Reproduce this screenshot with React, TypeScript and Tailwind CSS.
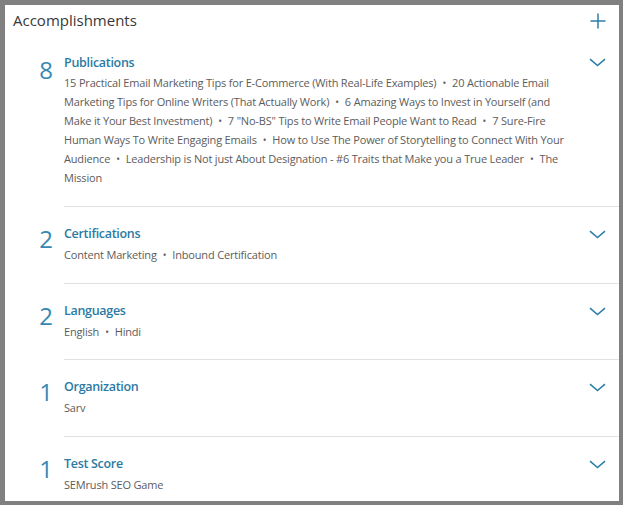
import React from "react";

const Sep = () => <span className="mx-[6px] text-[10px] leading-none">•</span>;

const Chevron = () => (
  <svg width="17" height="9" viewBox="0 0 17 9" fill="none">
    <path d="M1 1.2 L8.5 7.5 L16 1.2" stroke="#2c7ea7" strokeWidth="1.6" />
  </svg>
);

type Sec = { n: number; title: string; lines: React.ReactNode[]; first?: boolean; last?: boolean; pb?: string };

const Section = ({ n, title, lines, first, last, pb }: Sec) => (
  <div className="flex">
    <div className="w-[59px] shrink-0 pl-[29px]">
      <div className={`w-[24px] text-center text-[24px] leading-none text-[#3688b2] ${first ? "mt-[13px]" : "mt-[20px]"}`}>{n}</div>
    </div>
    <div className={`flex-1 pr-[12px] ${last ? "" : "border-b border-[#e1e1e1]"} ${first ? "pt-[8px]" : "pt-[17px]"} ${pb ?? "pb-[18px]"}`}>
      <div className="flex items-start justify-between">
        <div className="text-[12.5px] tracking-[-0.3px] leading-[20px] font-semibold text-[#2b7aa3]">{title}</div>
        <div className={`${first ? "mt-[5px]" : "mt-[6px]"} mr-[1px]`}><Chevron /></div>
      </div>
      <div className={`${first ? "mt-0" : "mt-[1px]"} text-[11px] tracking-[-0.18px] leading-[19px] text-[#5c5c5c] whitespace-nowrap`}>
        {lines.map((l, i) => (
          <div key={i} className="h-[19px]">{l}</div>
        ))}
      </div>
    </div>
  </div>
);

export default function App() {
  return (
    <div className="w-[623px] h-[505px] bg-[#808080] pt-[5px] pl-[5px] pr-[4px] pb-[4px]" style={{ fontFamily: '"Open Sans", "Noto Sans", sans-serif' }}>
      <div className="h-full bg-white overflow-hidden">
        <div className="h-[40px] flex items-start justify-between pl-[8px] pr-[13px] pt-[3px]">
          <div className="text-[15px] leading-[24px] text-[#383838]">Accomplishments</div>
          <svg width="16" height="16" viewBox="0 0 16 16" className="mt-[5px]">
            <path d="M8 0.5 V15.5 M0.5 8 H15.5" stroke="#2c7ea7" strokeWidth="1.5" />
          </svg>
        </div>
        <Section
          first
          n={8}
          pb="pb-[19px]"
          title="Publications"
          lines={[
            <>15 Practical Email Marketing Tips for E-Commerce (With Real-Life Examples)<Sep />20 Actionable Email</>,
            <>Marketing Tips for Online Writers (That Actually Work)<Sep />6 Amazing Ways to Invest in Yourself (and</>,
            <>Make it Your Best Investment)<Sep />7 "No-BS" Tips to Write Email People Want to Read<Sep />7 Sure-Fire</>,
            <>Human Ways To Write Engaging Emails<Sep />How to Use The Power of Storytelling to Connect With Your</>,
            <>Audience<Sep />Leadership is Not just About Designation - #6 Traits that Make you a True Leader<Sep />The</>,
            <>Mission</>,
          ]}
        />
        <Section n={2} pb="pb-[19px]" title="Certifications" lines={[<>Content Marketing<Sep />Inbound Certification</>]} />
        <Section n={2} title="Languages" lines={[<>English<Sep />Hindi</>]} />
        <Section n={1} pb="pb-[19px]" title="Organization" lines={[<>Sarv</>]} />
        <Section last n={1} title="Test Score" lines={[<>SEMrush SEO Game</>]} />
      </div>
    </div>
  );
}
